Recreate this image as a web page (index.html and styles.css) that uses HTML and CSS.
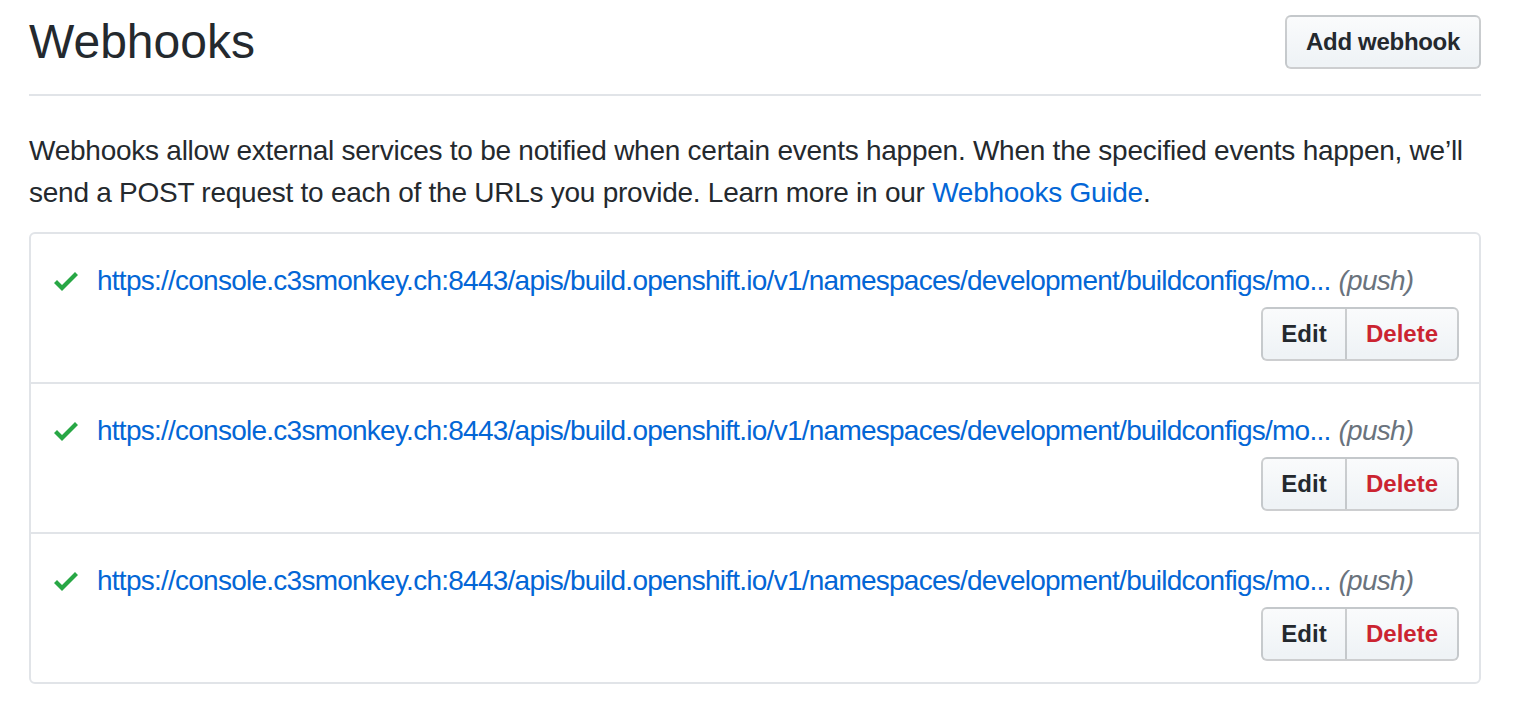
FILE: index.html
```html
<!DOCTYPE html>
<html lang="en">
<head>
<meta charset="utf-8">
<title>Webhooks</title>
<link rel="stylesheet" href="styles.css">
</head>
<body>
<div class="page">
  <div class="subhead">
    <h2 class="subhead-heading">Webhooks</h2>
    <a class="btn btn-add" href="#">Add webhook</a>
  </div>
  <p class="intro">Webhooks allow external services to be notified when certain events happen. When the specified events happen, we’ll send a POST request to each of the URLs you provide. Learn more in our <a href="#">Webhooks Guide</a>.</p>
  <div class="box">
    <div class="hook">
      <div class="hook-line">
        <svg class="check" viewBox="0 0 12 16" width="24" height="32"><path fill="currentColor" fill-rule="evenodd" d="M12 5l-8 8-4-4 1.5-1.5L4 10l6.5-6.5L12 5z"/></svg>
        <a class="hook-url" href="#">https://console.c3smonkey.ch:8443/apis/build.openshift.io/v1/namespaces/development/buildconfigs/mo...</a>
        <em class="hook-events">(push)</em>
      </div>
      <div class="hook-actions">
        <div class="btn-group">
          <a class="btn btn-edit" href="#">Edit</a><a class="btn btn-danger" href="#">Delete</a>
        </div>
      </div>
    </div>
    <div class="hook">
      <div class="hook-line">
        <svg class="check" viewBox="0 0 12 16" width="24" height="32"><path fill="currentColor" fill-rule="evenodd" d="M12 5l-8 8-4-4 1.5-1.5L4 10l6.5-6.5L12 5z"/></svg>
        <a class="hook-url" href="#">https://console.c3smonkey.ch:8443/apis/build.openshift.io/v1/namespaces/development/buildconfigs/mo...</a>
        <em class="hook-events">(push)</em>
      </div>
      <div class="hook-actions">
        <div class="btn-group">
          <a class="btn btn-edit" href="#">Edit</a><a class="btn btn-danger" href="#">Delete</a>
        </div>
      </div>
    </div>
    <div class="hook">
      <div class="hook-line">
        <svg class="check" viewBox="0 0 12 16" width="24" height="32"><path fill="currentColor" fill-rule="evenodd" d="M12 5l-8 8-4-4 1.5-1.5L4 10l6.5-6.5L12 5z"/></svg>
        <a class="hook-url" href="#">https://console.c3smonkey.ch:8443/apis/build.openshift.io/v1/namespaces/development/buildconfigs/mo...</a>
        <em class="hook-events">(push)</em>
      </div>
      <div class="hook-actions">
        <div class="btn-group">
          <a class="btn btn-edit" href="#">Edit</a><a class="btn btn-danger" href="#">Delete</a>
        </div>
      </div>
    </div>
  </div>
</div>
</body>
</html>
```

FILE: styles.css
```css
* { box-sizing: border-box; }
html, body { margin: 0; padding: 0; background: #fff; }
body {
  font-family: "Liberation Sans", Arial, Helvetica, sans-serif;
  color: #24292e;
  font-size: 28px;
  line-height: 1.5;
}
a { color: #0366d6; text-decoration: none; }
.page {
  width: 1452px;
  margin-left: 29px;
  padding-top: 15px;
}
.subhead {
  display: flex;
  align-items: center;
  justify-content: space-between;
  padding-bottom: 25px;
  border-bottom: 2px solid #e1e4e8;
}
.subhead-heading {
  margin: 0;
  font-size: 48px;
  font-weight: 400;
  line-height: 54px;
}
.btn {
  display: inline-flex;
  align-items: center;
  justify-content: center;
  height: 54px;
  padding: 0 18px;
  font-size: 24px;
  font-weight: 700;
  color: #24292e;
  background: linear-gradient(180deg, #fafbfc 0%, #eff3f6 90%);
  border: 2px solid rgba(27, 31, 35, 0.2);
  border-radius: 6px;
  white-space: nowrap;
}
.btn-add { width: 196px; letter-spacing: -0.3px; }
.intro {
  margin: 34px 0 18px;
  line-height: 42px;
  letter-spacing: -0.25px;
}
.box {
  border: 2px solid #e1e4e8;
  border-radius: 6px;
}
.hook {
  padding: 29px 20px 21px 23px;
}
.hook + .hook { border-top: 2px solid #e1e4e8; }
.hook-line {
  display: flex;
  align-items: center;
  height: 36px;
  line-height: 36px;
  white-space: nowrap;
  letter-spacing: -0.75px;
}
.check {
  color: #28a745;
  flex: none;
  margin-right: 19px;
}
.hook-url { color: #0366d6; }
.hook-events {
  color: #6a737d;
  margin-left: 8px;
}
.hook-actions {
  display: flex;
  justify-content: flex-end;
  margin-top: 8px;
}
.btn-group { display: flex; }
.btn-group .btn:first-child {
  width: 86px;
  border-top-right-radius: 0;
  border-bottom-right-radius: 0;
}
.btn-group .btn:last-child {
  width: 114px;
  margin-left: -2px;
  border-top-left-radius: 0;
  border-bottom-left-radius: 0;
}
.btn-danger { color: #cb2431; }
```
